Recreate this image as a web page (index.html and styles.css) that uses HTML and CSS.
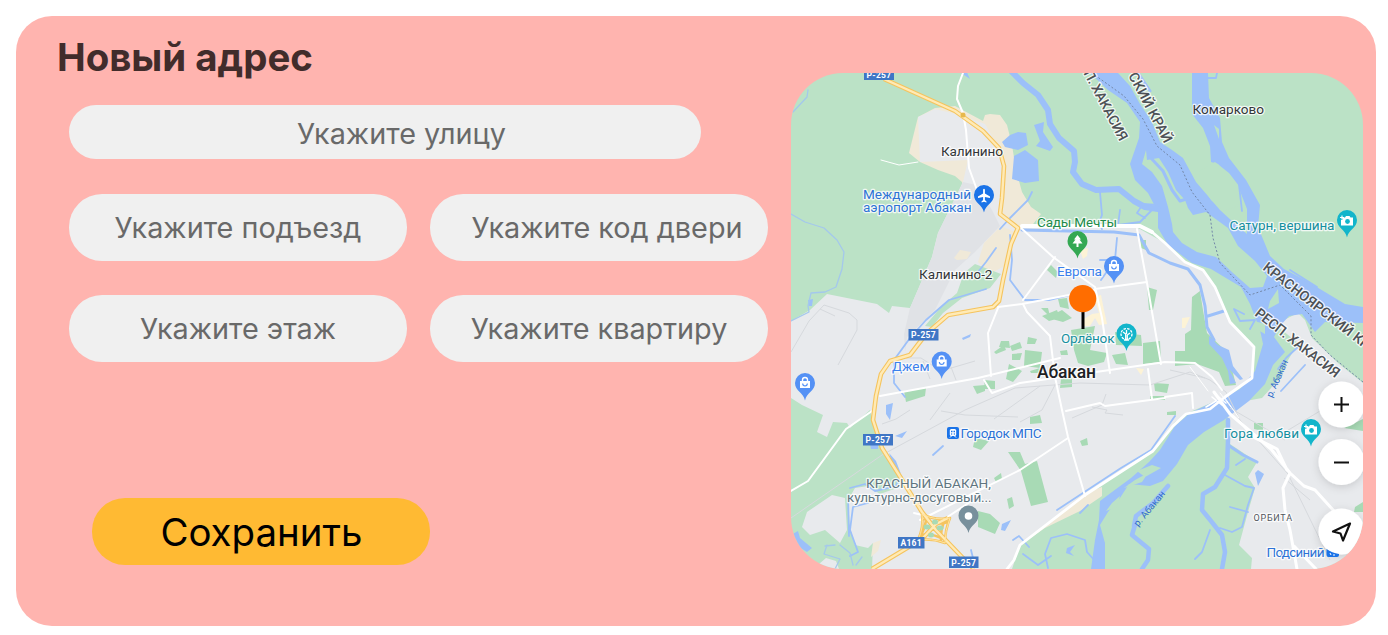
FILE: index.html
```html
<!DOCTYPE html>
<html lang="ru">
<head>
<meta charset="utf-8">
<title>Новый адрес</title>
<link rel="stylesheet" href="styles.css">
</head>
<body>
<main class="card">
  <section class="form">
    <h1 class="title">Новый адрес</h1>
    <div class="field street">Укажите улицу</div>
    <div class="grid">
      <div class="field">Укажите подъезд</div>
      <div class="field door">Укажите код двери</div>
      <div class="field">Укажите этаж</div>
      <div class="field">Укажите квартиру</div>
    </div>
    <button class="save" type="button">Сохранить</button>
  </section>
  <section class="map">
    <svg class="map-svg" viewBox="791 73 572 496" width="572" height="496">
      <defs>
        <path id="pin" d="M0 17C-1.500 9-10 7.500-10-.5A10 10 0 0 1 10-.5C10 7.500 1.500 9 0 17Z"/>
        <g id="bag"><path d="M-5-2.500H5V4.500H-5Z" fill="#fff"/><path d="M-2.500-2V-3.500A2.500 2.500 0 0 1 2.500-3.500V-2" fill="none" stroke="#fff" stroke-width="1.400"/><path d="M-2.300 0A2.300 2.300 0 0 0 2.300 0" fill="none" stroke="#5491f5" stroke-width="1.200"/></g>
        <g id="camera"><path d="M-4.500-3H-2L-1-4.500H2.500L3.500-3H6V5H-6V-.5H-4.500Z" fill="#fff"/><circle cx=".5" cy="1" r="2.400" fill="#12b5cb"/><path d="M-7-3H-3M-5-5V-1" stroke="#fff" stroke-width="1.200"/></g>
        <filter id="shadow" x="-40%" y="-40%" width="180%" height="180%"><feDropShadow dx="0" dy="2" stdDeviation="4" flood-opacity=".14"/></filter>
      </defs>
      <rect class="green" x="791" y="73" width="572" height="496"/>

      <!-- built-up land -->
      <path class="beige" d="M918 117L935 108L955 106L983 121L985 115L990 114L1000 115L1007 125L1012 145L1016 170L1022 192L1031 207L1041 214L1030 228L1010 270L995 290L965 270L962 182L955 176L938 170L920 162L909 153Z"/>
      <path class="land" d="M918 117L935 109L960 115L985 124L1000 150L1003 180L1000 215L1020 228H1138L1165 243L1185 262L1203 270L1215 287L1230 322L1254 347L1252 378L1225 397L1190 412L1175 422L1152 452L1085 495L1020 545L1012 569H872L873 543L868 548L855 545L850 528L848 500L855 488L868 486L880 494L897 488L903 477L882 452L873 422L870 410L850 428L847 423L833 422L827 437L817 432L823 415L802 405L791 398V321L810 310L827 294L852 299L877 304L889 313L892 306L910 308L932 257L938 233L963 182L968 160L920 162Z"/>
      <path class="land" d="M1228 415L1227 442L1257 462L1248 477L1255 488L1248 512L1239 545L1252 558L1251 569H1363V383L1338 363L1312 338L1305 320L1298 313L1284 320L1277 326L1298 343L1287 362L1280 378L1262 398L1240 402Z"/>
      <path class="land" d="M845 498L832 495L807 512L802 527L810 535L825 530L840 543L847 530ZM819 564L826 558L836 561L839 569H820Z"/>
      <path class="airport" d="M963 182L976 185L992 210L1000 226L975 252L955 270L935 310L907 337L905 352L904 334L910 308L932 257L938 233Z"/>
      <path class="beige" d="M1001 226L1015 232L1006 265L990 274L978 262L984 243ZM954 258L960 250L971 252L967 259L957 260ZM1020 545L1085 493L1102 487L1102 496L1080 511L1045 528ZM873 543L881 540L878 551L871 557Z"/>
      <path class="green" d="M925 326L941 307L957 293L964 273L975 264L1001 274L990 288L962 298L943 313L932 327Z"/>

      <!-- parks -->
      <g class="park">
        <path d="M1192 297L1200 291L1203 310L1207 333L1228 353L1236 385L1225 386L1219 372L1197 364L1175 366V351H1185V334L1191 330Z"/>
        <path d="M1047 270L1051 265L1058 272L1056 278ZM1147 287L1157 290L1153 310L1149 310ZM1140 240H1146V250L1141 248Z"/>
        <path d="M1041 308H1048L1050 316L1062 310L1072 318L1063 322L1052 319ZM1058 299L1067 298L1069 309L1060 307ZM1042 316L1057 310L1060 318L1049 321Z"/>
        <path d="M1071 330L1095 326L1090 350L1107 353L1104 362L1088 366L1078 363L1074 350ZM1115 332L1141 335L1142 346L1116 345ZM1143 343L1160 341L1161 362L1143 364ZM1112 355L1125 353L1128 365L1116 364ZM1060 351L1067 350L1068 355H1061Z"/>
        <path d="M1025 350L1042 352L1040 368L1024 366ZM1001 341H1009L1010 348L999 347ZM1028 337L1037 339L1035 344H1027ZM1009 364L1022 371L1013 382L1006 379ZM984 380L995 381V389H985ZM1061 379L1072 378V387L1060 388Z"/>
        <path d="M1008 452H1020L1025 464L1037 461L1048 502L1031 506L1021 471ZM1030 417L1040 415L1042 423L1030 424ZM1080 441L1087 438L1088 445L1082 446ZM975 438L989 441L981 450L973 447ZM994 478L1001 473L1002 479L996 482ZM1007 499L1012 497L1014 506L1009 509ZM978 511L990 514L1000 523L995 534L978 527ZM904 391L926 388L925 396L906 402ZM973 386L985 385V391L977 394ZM1154 383L1169 384L1167 393L1155 391ZM1150 396H1165V400H1150ZM1167 412L1176 411V415H1167ZM1254 423H1263V431L1254 429ZM1355 507L1363 502V512H1354ZM1344 428L1363 419V431Z"/>
        <path d="M994 352L1004 345L1006 350L996 354ZM1010 346L1020 342L1022 348L1012 351ZM1012 354L1022 353L1020 360H1012ZM1030 371L1040 368L1042 373H1031Z"/>
      </g>
      <path class="sand" d="M1094 297L1101 295L1104 310L1107 324L1099 325L1095 318L1090 326H1082V320L1092 314L1099 313ZM1080 250L1088 248L1087 256L1083 259ZM1136 368L1144 369L1141 375ZM1182 318L1190 317L1185 328H1182Z"/>

      <!-- rivers and lakes -->
      <g class="water">
        <path d="M1090 73H1118L1130 86L1140 104L1152 122L1160 142L1172 150L1183 158L1196 182L1220 210L1233 222L1247 234L1247 209L1238 186L1218 164L1211 162L1210 146L1203 128L1192 114V73H1208L1209 98L1220 118L1222 142L1229 158L1246 180L1260 205L1258 227L1270 256L1284 269L1303 279L1320 289L1345 304L1363 307V323L1325 322L1315 332L1302 314L1289 316L1280 326L1274 337L1285 352L1273 365L1265 384L1249 401L1224 420L1204 432L1188 445L1177 464L1163 481L1150 486L1129 484L1120 498L1108 512L1100 525L1105 543L1105 569H1091L1095 540L1099 520L1100 501L1112 492L1131 478L1149 462L1160 450L1175 426L1190 413L1222 398L1240 389L1255 371L1263 344L1260 330L1250 304L1241 287L1211 269L1192 263L1168 245L1158 228L1158 212L1148 193L1135 180L1130 164L1139 138L1140 122L1127 103L1108 90Z"/>
        <path d="M1002 142L1010 135L1018 132L1026 133L1028 145L1018 150L1005 147ZM1014 156L1025 150L1038 160L1039 181L1025 183L1012 179ZM1034 125L1044 122L1043 132L1053 147L1050 151L1036 146L1040 141Z"/>
        <path d="M962 338L971 334L970 337L963 340ZM886 405L893 403L890 420L886 414ZM889 453L896 461L901 474L892 463ZM895 436L907 431L902 438ZM1002 524L1011 520L1005 531L1001 530ZM870 444H878V449H871ZM1067 548L1075 545L1070 552L1074 556L1066 553ZM808 300L813 299L812 306H809ZM1209 336L1218 345L1229 350L1233 366L1243 379L1240 380L1229 369L1236 383L1230 384L1228 371L1222 358L1209 344ZM791 535L798 531L800 538L812 548L807 552L791 542ZM1258 470L1264 474L1258 486L1255 473ZM965 68L970 79L961 73Z"/>
      </g>
      <path class="green" d="M1173 232L1172 224L1168 207L1162 186L1152 172L1142 164L1146 150L1147 160L1159 158L1168 172L1176 190L1185 200L1188 208L1193 215L1206 212L1228 228L1238 246L1255 261L1267 276L1263 287L1250 288L1233 273L1216 257L1197 252L1182 243ZM1199 171L1215 162L1229 173L1239 186L1238 206L1223 211L1211 200L1200 183ZM1270 301L1278 289L1279 303L1268 309ZM1214 125L1219 129L1219 139ZM1235 300L1246 302L1252 317L1242 312ZM1254 321L1265 324L1265 334L1256 329ZM1124 488L1135 480L1148 473L1142 482ZM1137 471L1152 465L1161 468L1145 477ZM1112 503L1120 496L1117 507L1106 511Z"/>
      <g class="river">
        <path stroke-width="6" d="M1011 71L1023 83L1038 95L1048 110L1050 124L1059 138L1074 151L1075 162L1073 172L1082 184L1096 190L1119 189L1134 201L1145 207L1158 209"/>
        <path stroke-width="4.500" d="M1135 525L1132 535L1149 549L1148 560L1142 569M1168 486L1153 503L1136 516L1134 526"/>
        <path stroke-width="4.500" d="M1228 420L1228 440L1227 468L1215 487L1203 494L1202 510L1211 521L1222 535L1225 552L1222 569"/>
        <path stroke-width="3" d="M1150 157L1163 171L1172 190L1180 201L1190 198L1186 186M1138 73L1150 91M1022 230L1114 232L1139 235L1149 253L1170 263L1188 269L1200 285L1205 306L1207 327L1214 340M1208 316L1224 311M1228 445L1243 455L1257 462M1184 165L1187 180L1180 186"/>
        <path stroke-width="1.800" d="M905 397L894 383V360L910 338L926 320L949 300L986 289M1010 235L1012 260L1010 280L1025 300H1050L1082 292M1117 238L1115 260L1101 280M1100 192L1102 215L1099 223L1102 229M1120 210L1118 225L1140 222L1157 205L1143 204L1137 213L1145 218M1100 260H1115M850 488L865 484L875 491L896 486L900 476M848 495L849 536M868 503L853 507L850 530L858 552L850 556M1048 568L1045 554L1051 538L1067 534L1085 540L1087 552L1095 561M1023 554L1038 565L1051 556M1013 540L1019 536L1029 547M971 550L973 558M1057 510L1121 468L1151 450L1175 416M1080 513L1088 505M933 455L943 446M1225 475L1245 486L1254 488L1248 505L1242 527L1232 532L1220 528M1210 530L1202 552L1195 559M1230 507L1248 512M1281 391L1305 365M1290 270L1317 287M1208 78H1216L1217 73M1239 185L1242 211M1032 192L1028 200L1010 218L1000 229M996 248L986 262L978 272M1244 314L1234 309L1240 321L1255 320L1250 329M1278 369L1286 358L1299 346M1236 465L1245 459"/>
        <path class="thin" d="M791 214L805 222L824 228L837 240L844 252L842 269L836 287L825 292L811 293L808 306L809 312L791 321M808 90L807 97L793 112M827 545L824 554L840 559L835 569M840 545L850 553L853 565M825 546L835 545M862 557L856 565"/>
      </g>

      <!-- railways and minor streets -->
      <g class="rail">
        <path d="M791 518L882 455L965 410L1015 388L1080 383L1150 385L1190 372L1210 380L1226 392L1240 420L1288 474L1330 560"/>
        <path d="M791 352L809 321L824 305L849 313L857 320V330L838 365M820 309L835 316M1170 370L1205 378M906 358H921L941 371L975 361M923 361L930 379M951 367L956 380M941 411L965 415L1018 417M950 393L930 420M1056 383L1042 410L1020 422M994 419L1040 386M1092 407L1107 410L1105 413L1123 415M1106 394L1102 405L1072 418M1230 408L1285 440M1285 432L1320 411L1330 390M882 424L896 419L910 410M1284 478L1310 500"/>
      </g>

      <!-- streets -->
      <g class="road">
        <path stroke-width="2" d="M963 73L958 86L957 99L963 113L966 130L969 168L977 190M1021 228L1053 257L1095 287L1102 318L1110 373M1095 289L1147 282M1055 257L1023 300M880 396L978 378L1060 358M998 307L1022 304L1095 290M1023 304L1027 312L1050 336L1055 377L1062 410L1068 437L1085 496M998 308L988 333L991 376M1137 229L1147 283L1161 364M984 380L992 393L1020 383L1165 362L1195 363L1212 377L1222 390M1066 411L1100 403L1105 406L1165 398M1068 438L1020 470L920 520M1148 369L1152 399M791 491L808 481L846 429L872 411M914 513L943 520L970 502M1165 397L1192 393L1193 408"/>
        <path stroke-width="4" d="M1022 226H1140L1152 232"/>
        <path stroke-width="2.800" d="M1152 232L1165 243L1185 262L1203 270L1215 287L1230 322L1254 347L1252 378L1225 397L1210 409L1186 414L1173 426L1153 451L1085 495L1020 545L1014 560L1007 569"/>
        <path stroke-width="3" d="M1214 392L1230 414L1271 449L1290 473L1304 486L1315 490L1334 511M1290 473L1283 488L1285 510L1290 530L1297 569M1294 546L1316 569M1243 425L1255 438L1277 449L1287 470"/>
        <path stroke-width="1.500" d="M1216 401L1206 407M1214 393L1226 403M1212 397L1222 405"/>
        <path stroke-width="1" d="M881 160L899 165L918 162M1225 398L1239 418M1190 367L1208 391M1220 393L1231 407"/>
      </g>

      <!-- highways -->
      <g class="highway-edge">
        <path d="M884 79L955 111L983 131L999 148L1004 166L1002 198L1000 214L1018 228L1011 244L1003 280L999 301L993 307L948 315L926 334L910 355L890 361L881 374L876 396L873 420L882 448L899 475L922 512L936 530L962 557L974 569M872 569L922 539L936 524L948 518"/>
        <path class="ramp" d="M922 514Q935 521 950 518Q945 530 945 543Q932 538 918 540Q924 527 922 514M927 517Q925 528 920 538M945 520Q940 530 941 541M924 519Q935 526 948 522M921 535Q932 533 943 539"/>
      </g>
      <g class="highway">
        <path d="M884 79L955 111L983 131L999 148L1004 166L1002 198L1000 214L1018 228L1011 244L1003 280L999 301L993 307L948 315L926 334L910 355L890 361L881 374L876 396L873 420L882 448L899 475L922 512L936 530L962 557L974 569M872 569L922 539L936 524L948 518"/>
      </g>
      <path class="ramp-inner" d="M922 514Q935 521 950 518Q945 530 945 543Q932 538 918 540Q924 527 922 514"/>
      <g class="park"><ellipse cx="927" cy="527" rx="3.500" ry="2.500"/><ellipse cx="935" cy="522" rx="3" ry="2.500"/><ellipse cx="940" cy="528" rx="3.500" ry="2.500"/><ellipse cx="931" cy="535" rx="3" ry="2.500"/></g>
      <circle cx="963" cy="115" r="2.500" fill="#e7b84c"/>
      <path class="border" d="M1092 73L1124 96L1143 119L1157 146L1180 165L1192 192L1210 215L1213 238L1220 263L1250 295L1280 285L1311 316V335L1330 355L1363 382"/>

      <!-- road shields -->
      <g class="shield">
        <rect x="864" y="68" width="30" height="12"/><text x="879" y="78">P-257</text>
        <rect x="908.500" y="329" width="30" height="11.500"/><text x="923.500" y="338">P-257</text>
        <rect x="863" y="434" width="30" height="11.500"/><text x="878" y="443">P-257</text>
        <rect x="898" y="537" width="26.500" height="11.500"/><text x="911.200" y="546">A161</text>
        <rect x="949" y="556.500" width="29.500" height="11.500"/><text x="963.700" y="565.500">P-257</text>
      </g>

      <!-- place names -->
      <g class="label">
        <text x="941" y="156" textLength="62">Калинино</text>
        <text x="1192.500" y="113.500" textLength="71.500">Комарково</text>
        <text x="919" y="278.500" textLength="73.500">Калинино-2</text>
        <text class="city" x="1037" y="377.500" textLength="59">Абакан</text>
        <text class="small" x="1253.500" y="521" textLength="38.500">ОРБИТА</text>
        <text class="blue" x="863" y="198.500" textLength="108">Международный</text>
        <text class="blue" x="863" y="212" textLength="108.500">аэропорт Абакан</text>
        <text class="green-text" x="1037" y="227" textLength="80">Сады Мечты</text>
        <text class="sky" x="1057" y="276" textLength="45">Европа</text>
        <text class="teal" x="1061" y="343" textLength="53.500">Орлёнок</text>
        <text class="sky" x="892" y="371" textLength="37.500">Джем</text>
        <text class="blue" x="960.500" y="438" textLength="81">Городок МПС</text>
        <text class="teal" x="1229.500" y="229.500" textLength="105">Сатурн, вершина</text>
        <text class="teal" x="1224" y="438" textLength="75">Гора любви</text>
        <text class="slate" x="866" y="488" textLength="125">КРАСНЫЙ АБАКАН,</text>
        <text class="slate" x="847" y="501.500" textLength="144.500">культурно-досуговый...</text>
        <text class="blue" x="1266.500" y="556.500" textLength="58">Подсиний</text>
        <text class="region" transform="translate(1071.500 51) rotate(62)" textLength="103">РЕСП. ХАКАСИЯ</text>
        <text class="region" text-anchor="end" transform="translate(1164.500 144) rotate(62)">КРАСНОЯРСКИЙ КРАЙ</text>
        <text class="region" transform="translate(1262 269) rotate(38)">КРАСНОЯРСКИЙ КРАЙ</text>
        <text class="region" transform="translate(1254 315) rotate(38)" textLength="103">РЕСП. ХАКАСИЯ</text>
        <text class="stream" transform="translate(1272 398) rotate(-66)" textLength="40">р. Абакан</text>
        <text class="stream" transform="translate(1138 527) rotate(-50)" textLength="43">р. Абакан</text>
      </g>

      <!-- markers -->
      <g transform="translate(984 195.500)"><use href="#pin" fill="#1a73e8"/><path fill="#fff" d="M-.9-6Q0-7.500 .9-6V-2L6 1V2.500L.9 1.500V4.500L2.500 6V7L0 6.300L-2.500 7V6L-.9 4.500V1.500L-6 2.500V1L-.9-2Z"/></g>
      <g transform="translate(1077.500 241.500)"><use href="#pin" fill="#34a853"/><path fill="#fff" d="M0-6.500L3.500-2H2L5 2H1V5.500H-1V2H-5L-2-2H-3.500Z"/></g>
      <g transform="translate(1114 266.500)"><use href="#pin" fill="#5491f5"/><use href="#bag"/></g>
      <g transform="translate(941.700 362)"><use href="#pin" fill="#5491f5"/><use href="#bag"/></g>
      <g transform="translate(805 383.500)"><use href="#pin" fill="#5491f5"/><use href="#bag"/></g>
      <g transform="translate(1126.500 334)"><use href="#pin" fill="#12b5cb"/><g fill="none" stroke="#fff" stroke-width="1.300"><circle r="5.500" stroke-dasharray="2.500 1.200"/><path d="M-2.500 6H2.500M-.8 6V0L-3.500-2M.8 6V1L3.500-1M0 0V-4"/></g></g>
      <g transform="translate(1347 220.500)"><use href="#pin" fill="#12b5cb"/><use href="#camera"/></g>
      <g transform="translate(1311 429.500)"><use href="#pin" fill="#12b5cb"/><use href="#camera"/></g>
      <g transform="translate(968.500 516)"><use href="#pin" fill="#78909c"/><circle r="3.800" fill="#fff"/></g>
      <g transform="translate(953 433)"><rect x="-6" y="-6" width="12" height="12" rx="2" fill="#1a73e8"/><rect x="-3.200" y="-4" width="6.400" height="7" rx="1.500" fill="#fff"/><path d="M-2-1.500H-.5M.5-1.500H2M-1.800 1H-.8M.8 1H1.800" stroke="#1a73e8" stroke-width="1.500"/><path d="M-3 4.500L-1.500 3M3 4.500L1.500 3" stroke="#fff"/></g>
      <path d="M1083 309V329" stroke="#000" stroke-width="3"/>
      <circle cx="1082.700" cy="298.700" r="13.600" fill="#ff6d00"/>

      <!-- map controls -->
      <g fill="#fff" filter="url(#shadow)"><circle cx="1341.500" cy="404.500" r="23"/><circle cx="1341.500" cy="462" r="23"/><circle cx="1341.500" cy="531.500" r="23"/></g>
      <path d="M1326.500 549V555Q1326.500 557 1328.500 557H1337Q1339 557 1339 555V554Q1332 553 1326.500 549Z" fill="#1a73e8"/>
      <path d="M1330 553L1331 555M1334 554V556" stroke="#fff"/>
      <path d="M1334 404.500H1349M1341.500 397V412M1334 462.500H1349" stroke="#111" stroke-width="2"/>
      <path d="M1350 523.500L1333 531.500L1340.500 533.500L1343 540.500Z" fill="none" stroke="#111" stroke-width="2.200" stroke-linejoin="round"/>
    </svg>
  </section>
</main>
</body>
</html>
```
FILE: styles.css
```css
* { box-sizing: border-box; }
body { margin: 0; padding: 16px 12px 0 16px; background: #fff; font-family: Inter, "Liberation Sans", sans-serif; }
.card { display: flex; align-items: flex-start; gap: 23px; width: 1360px; height: 609.500px; padding: 0 13px 0 41px; border-radius: 36px; background: #ffb4af; }
.form { display: flex; flex-direction: column; width: 711px; padding-left: 12px; }
.title { margin: 18px 0 0 -12px; font-size: 38.400px; line-height: 46px; font-weight: 700; color: #412c2b; }
.field { display: flex; align-items: center; justify-content: center; border-radius: 33px; background: #f0f0f0; color: #696969; font-size: 28.800px; line-height: 35px; white-space: nowrap; }
.street { width: 632px; height: 54px; margin-top: 25px; padding: 3px 0 0 33px; }
.grid { display: grid; grid-template-columns: 338px 338px; grid-auto-rows: 67px; gap: 34.500px 23px; margin-top: 34.500px; }
.door { padding-left: 16px; }
.save { width: 338px; height: 67px; margin: 136px 0 0 23.400px; padding: 0; border: 0; border-radius: 33px; background: #ffba33; color: #000; font: 400 38.400px/46px Inter, "Liberation Sans", sans-serif; }
.map { width: 572px; height: 495.500px; margin-top: 57px; overflow: hidden; border-radius: 52px; }
.map-svg { display: block; }

.green { fill: #bbe2c6; }
.land { fill: #e8eaed; }
.airport { fill: #e0e2e6; }
.beige { fill: #f0e9d8; }
.sand { fill: #fdf3d6; }
.park { fill: #a8dab5; }
.water { fill: #9cc0f9; }
.river { fill: none; stroke: #9cc0f9; stroke-linecap: round; stroke-linejoin: round; }
.thin { stroke: #a4c8ec; stroke-width: 1.300px; }
.rail { fill: none; stroke: #d6d9dd; stroke-width: 1px; stroke-linejoin: round; }
.road { fill: none; stroke: #fff; stroke-linejoin: round; stroke-linecap: round; }
.highway-edge { fill: none; stroke: #f5c45e; stroke-width: 4.600px; stroke-linejoin: round; }
.highway { fill: none; stroke: #ffeab5; stroke-width: 2.400px; stroke-linejoin: round; }
.ramp { stroke-width: 2.600px; }
.ramp-inner { fill: none; stroke: #ffe3a0; stroke-width: 1px; }
.border { fill: none; stroke: #7387a8; stroke-width: 1px; stroke-dasharray: 2 2; }
.shield { fill: #3f76c5; font: 700 8.500px Roboto, sans-serif; letter-spacing: .3px; text-anchor: middle; }
.shield text { fill: #fff; }
.label { font: 400 13.600px Roboto, sans-serif; fill: #333639; stroke: #fff; stroke-opacity: .8; stroke-width: 2.500px; stroke-linejoin: round; paint-order: stroke; }
.city { font-size: 17.500px; font-weight: 500; fill: #202124; }
.small { font-size: 9px; fill: #50555b; }
.blue { fill: #2d73d6; }
.sky { fill: #3b80ec; }
.teal { fill: #158f9f; }
.green-text { fill: #218b48; }
.slate { fill: #607580; }
.region { font-size: 14px; font-weight: 500; fill: #4d5156; }
.stream { font-size: 9.500px; fill: #2e6bcb; stroke: none; }
```
